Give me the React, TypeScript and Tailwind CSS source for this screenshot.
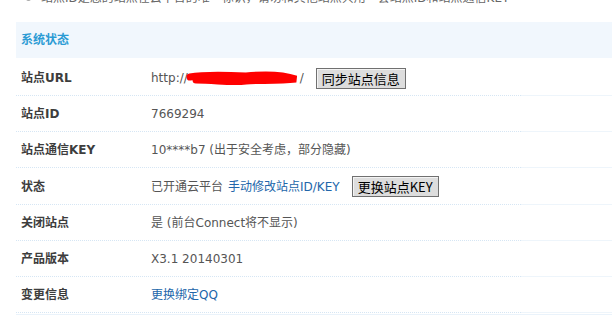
import React from "react";

const font = { fontFamily: '"DejaVu Sans", "Noto Sans CJK SC", sans-serif' };

function Btn({ children }: { children: React.ReactNode }) {
  return (
    <span
      className="inline-flex h-[21px] items-center border border-[#707070] bg-[#dddddd] px-[5px] text-[13px] leading-none text-black shadow-[inset_1px_1px_0_#f4f4f4]"
      style={{ fontFamily: '"Noto Sans CJK SC", sans-serif' }}
    >
      {children}
    </span>
  );
}

function Row({ label, children, tall }: { label: string; children: React.ReactNode; tall?: boolean }) {
  return (
    <div className={tall ? "flex h-[37px]" : "flex h-[36px]"}>
      <div className="flex w-[505px] items-center border-b border-dotted border-[#d6e6f4] pt-[1px]">
        <div className="w-[135px] pl-[5px] text-[12px] font-bold text-[#3d3d3d]">{label}</div>
        <div className="flex items-center text-[12px] text-[#555]">{children}</div>
      </div>
      <div className="flex-1 border-b border-[#eef5fb]" />
    </div>
  );
}

export default function App() {
  return (
    <div className="h-[315px] w-[612px] overflow-hidden bg-white" style={font}>
      <div className="mt-[-11px] flex h-[18px] items-center pl-[26px] text-[12px] leading-[18px] text-[#666]">
        <span className="mr-[10px] h-[5px] w-[5px] rounded-full bg-[#aaa]" />
        站点ID是您的站点在云平台的唯一标识，请勿和其他站点共用一套站点ID和站点通信KEY
      </div>
      <div className="ml-[16px] mt-[15px]">
        <div className="flex h-[36px] items-center bg-[#f1f7fd] pl-[5px] text-[12px] font-bold text-[#2b9bd4]">
          系统状态
        </div>
        <div className="pt-[2px]">
          <Row label="站点URL">
            <span>http://</span>
            <span className="relative inline-block h-[14px] w-[112px]">
              <svg width="116" height="16" viewBox="0 0 116 16" className="absolute left-[-2px] top-[-1px]">
                <path d="M4 7 C 20 4, 40 5, 60 6 C 80 4, 98 5, 110 9 C 92 11, 72 10, 60 11 C 45 13, 30 10, 10 10" stroke="#ff0000" strokeWidth="7" fill="none" strokeLinecap="round" />
              </svg>
            </span>
            <span>/</span>
            <span className="ml-[12px]">
              <Btn>同步站点信息</Btn>
            </span>
          </Row>
          <Row label="站点ID">7669294</Row>
          <Row label="站点通信KEY">10****b7 (出于安全考虑，部分隐藏)</Row>
          <Row label="状态" tall>
            <span>已开通云平台</span>
            <span className="ml-[5px] text-[#2266aa]">手动修改站点ID/KEY</span>
            <span className="ml-[12px]">
              <Btn>更换站点KEY</Btn>
            </span>
          </Row>
          <Row label="关闭站点">是 (前台Connect将不显示)</Row>
          <Row label="产品版本">X3.1 20140301</Row>
          <Row label="变更信息">
            <span className="text-[#2266aa]">更换绑定QQ</span>
          </Row>
        </div>
        <div className="mt-[1px] h-[10px] bg-[#eaf3fb]" />
      </div>
    </div>
  );
}
